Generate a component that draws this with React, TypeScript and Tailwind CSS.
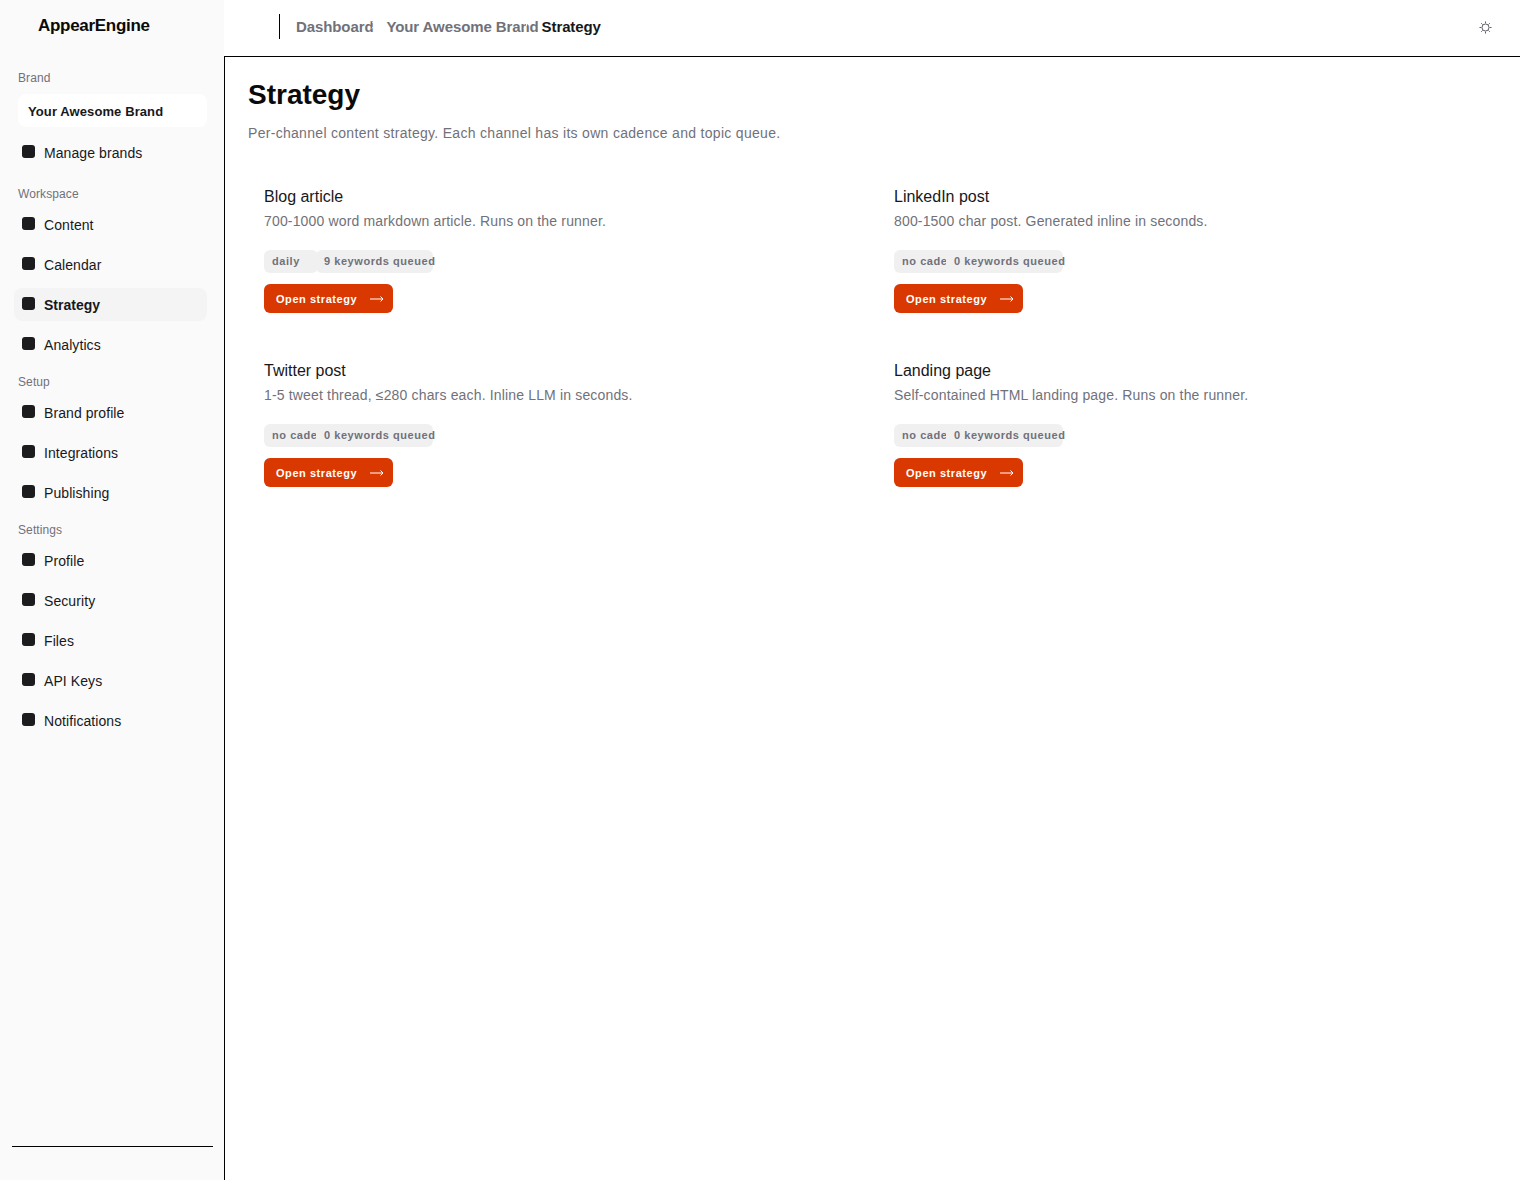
const font = "font-['Liberation_Sans',Arial,sans-serif]";

type NavItem = { label: string; active?: boolean };

const workspace: NavItem[] = [
  { label: "Content" },
  { label: "Calendar" },
  { label: "Strategy", active: true },
  { label: "Analytics" },
];
const setup: NavItem[] = [{ label: "Brand profile" }, { label: "Integrations" }, { label: "Publishing" }];
const settings: NavItem[] = [
  { label: "Profile" },
  { label: "Security" },
  { label: "Files" },
  { label: "API Keys" },
  { label: "Notifications" },
];

const channels = [
  { title: "Blog article", desc: "700-1000 word markdown article. Runs on the runner.", cadence: "daily", queued: "9 keywords queued" },
  { title: "LinkedIn post", desc: "800-1500 char post. Generated inline in seconds.", cadence: "no cadence", queued: "0 keywords queued" },
  { title: "Twitter post", desc: "1-5 tweet thread, ≤280 chars each. Inline LLM in seconds.", cadence: "no cadence", queued: "0 keywords queued" },
  { title: "Landing page", desc: "Self-contained HTML landing page. Runs on the runner.", cadence: "no cadence", queued: "0 keywords queued" },
];

function NavRow({ item }: { item: NavItem }) {
  return (
    <div
      className={`flex h-[33px] items-center gap-[9.5px] rounded-lg pl-[7.5px] text-sm ${
        item.active ? "bg-[#f4f4f5] font-bold text-[#18181b]" : "tracking-[0.08px] text-[#18181b]"
      }`}
    >
      <span className="mb-[2px] size-[13px] rounded-[3px] bg-[#1c1c1e]" />
      <span>{item.label}</span>
    </div>
  );
}

function Group({ label, items }: { label: string; items: NavItem[] }) {
  return (
    <div>
      <div className="h-[14px] pl-1 text-xs leading-[14px] tracking-[0.1px] text-[#71717a]">{label}</div>
      <div className="mt-[7px] flex flex-col gap-[7px]">
        {items.map((item) => (
          <NavRow key={item.label} item={item} />
        ))}
      </div>
    </div>
  );
}

const pillText = "h-[23px] items-center whitespace-nowrap rounded-md bg-[#f0f0f1] pl-2 text-[11px] font-bold tracking-[0.55px] text-[#71717a]";

function Card({ title, desc, cadence, queued }: (typeof channels)[number]) {
  return (
    <div className="h-[158px] pl-4">
      <h3 className="mt-[10px] h-[24px] text-base leading-6 text-[#18181b]">{title}</h3>
      <p className="mt-[2px] h-[20px] text-sm leading-5 tracking-[0.16px] text-[#71717a]">{desc}</p>
      <div className="mt-[19px] flex">
        <div className="w-[52px]">
          <span className={`flex w-fit min-w-[54px] pr-2 ${pillText}`}>{cadence}</span>
        </div>
        <span className={`relative flex w-[117px] ${pillText}`}>{queued}</span>
      </div>
      <button className="mt-[11px] flex h-[29px] w-[129px] items-center gap-[13px] rounded-md bg-[#d93900] pl-3 pt-px text-[11px] font-bold tracking-[0.55px] text-white">
        Open strategy
        <svg width="14" height="8" viewBox="0 0 14 8" fill="none" stroke="currentColor" strokeWidth="1">
          <path d="M0 4h13M10.5 1.5 13 4l-2.5 2.5" />
        </svg>
      </button>
    </div>
  );
}

function SunIcon() {
  return (
    <svg width="13" height="13" viewBox="0 0 14 14" fill="none" stroke="#52525b" strokeWidth="1">
      <circle cx="7" cy="7" r="3.8" />
      <path d="M7 0.5v2M7 11.5v2M0.5 7h2M11.5 7h2M2.4 2.4l1.4 1.4M10.2 10.2l1.4 1.4M2.4 11.6l1.4-1.4M10.2 3.8l1.4-1.4" />
    </svg>
  );
}

function Chevron({ className }: { className: string }) {
  return (
    <svg
      width="5"
      height="8"
      viewBox="0 0 5 8"
      fill="none"
      stroke="#ffffff"
      strokeWidth="1"
      className={`absolute top-[5px] ${className}`}
    >
      <path d="M1 0.5 4 4 1 7.5" />
    </svg>
  );
}

export default function App() {
  return (
    <div className={`flex h-[1180px] w-[1520px] overflow-hidden bg-white ${font}`}>
      <aside className="flex w-[224px] shrink-0 flex-col bg-[#fafafa]">
        <div className="h-[50px] pl-[38px] pt-[16px] text-[17px] font-bold leading-[20px] tracking-[-0.3px] text-[#0a0a0a]">
          AppearEngine
        </div>
        <div className="flex flex-1 flex-col pl-[14px] pr-[17px] pt-[21px]">
          <div className="h-[14px] pl-1 text-xs leading-[14px] tracking-[0.1px] text-[#71717a]">Brand</div>
          <div className="ml-1 mt-[9px] flex h-[33px] items-center rounded-lg bg-white pl-[10px] pt-[2px] text-[13px] font-bold tracking-[0.1px] text-[#18181b]">
            Your Awesome Brand
          </div>
          <div className="mt-[9px]">
            <NavRow item={{ label: "Manage brands" }} />
          </div>
          <div className="mt-[18px] flex flex-col gap-[14px]">
            <Group label="Workspace" items={workspace} />
            <Group label="Setup" items={setup} />
            <Group label="Settings" items={settings} />
          </div>
        </div>
        <div className="mb-[33px] ml-3 mr-[11px] h-px bg-black" />
      </aside>
      <div className="flex min-w-0 flex-1 flex-col">
        <header className="flex h-[57px] items-center border-b border-b-black pl-[55px] pr-[28px]">
          <div className="mb-[4px] h-[25px] w-px bg-black" />
          <nav className="mb-[2px] ml-4 flex items-center text-[15px] font-bold tracking-[-0.1px] text-[#71717a]">
            <span className="relative">
              Dashboard
              <Chevron className="left-[75px]" />
            </span>
            <span className="relative ml-[13px]">
              Your Awesome Brand
              <Chevron className="left-[137px]" />
            </span>
            <span className="ml-[3px] text-[#18181b]">Strategy</span>
          </nav>
          <div className="mb-px ml-auto">
            <SunIcon />
          </div>
        </header>
        <main className="flex-1 border-l border-l-black pl-[23px] pr-[8px] pt-[20px]">
          <h1 className="h-[36px] text-[28px] font-bold leading-9 text-[#0a0a0a]">Strategy</h1>
          <p className="mt-[8px] h-[24px] text-sm leading-6 tracking-[0.3px] text-[#71717a]">
            Per-channel content strategy. Each channel has its own cadence and topic queue.
          </p>
          <div className="mt-[30px] grid grid-cols-[630px_1fr] gap-y-[16px]">
            {channels.map((c) => (
              <Card key={c.title} {...c} />
            ))}
          </div>
        </main>
      </div>
    </div>
  );
}
